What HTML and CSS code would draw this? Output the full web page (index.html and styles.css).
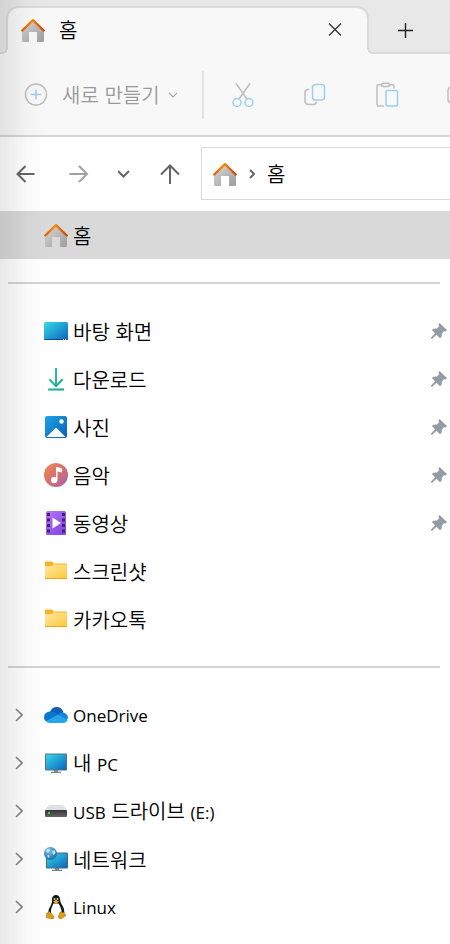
FILE: index.html
```
<!DOCTYPE html>
<html lang="ko">
<head>
  <meta charset="UTF-8">
  <meta name="viewport" content="width=device-width, initial-scale=1.0">
  <title>홈</title>
  <link rel="stylesheet" href="styles.css">
</head>
<body>
  <!-- shared icons -->
  <svg class="defs" width="0" height="0" aria-hidden="true">
    <defs>
      <linearGradient id="wall" x1="0" y1="0" x2="1" y2="1"><stop offset="0" stop-color="#d8d8d8"/><stop offset="1" stop-color="#9c9c9c"/></linearGradient>
      <linearGradient id="roof" x1="0" y1="0" x2="1" y2="0"><stop offset="0" stop-color="#e0600c"/><stop offset=".45" stop-color="#f58a07"/><stop offset="1" stop-color="#cf4108"/></linearGradient>
      <linearGradient id="screen" x1="0" y1="0" x2="1" y2="1"><stop offset="0" stop-color="#35dbe6"/><stop offset="1" stop-color="#0b63bd"/></linearGradient>
      <linearGradient id="down" x1="0" y1="0" x2="1" y2="1"><stop offset="0" stop-color="#3fcf8e"/><stop offset="1" stop-color="#0d9f97"/></linearGradient>
      <linearGradient id="photo" x1="0" y1="0" x2="1" y2="1"><stop offset="0" stop-color="#1fa5ea"/><stop offset="1" stop-color="#0a5eb5"/></linearGradient>
      <linearGradient id="music" x1="0" y1="0" x2="1" y2="1"><stop offset="0" stop-color="#f28a4e"/><stop offset=".5" stop-color="#d4716f"/><stop offset="1" stop-color="#a75fae"/></linearGradient>
      <linearGradient id="film" x1="0" y1="0" x2="1" y2="1"><stop offset="0" stop-color="#b777fa"/><stop offset="1" stop-color="#8040e0"/></linearGradient>
      <linearGradient id="paper" x1="0" y1="0" x2="1" y2="1"><stop offset="0" stop-color="#ffe7a2"/><stop offset="1" stop-color="#ffc93c"/></linearGradient>
      <linearGradient id="drive" x1="0" y1="0" x2="0" y2="1"><stop offset="0" stop-color="#353535"/><stop offset="1" stop-color="#666"/></linearGradient>
      <radialGradient id="globe" cx=".4" cy=".3" r=".7"><stop offset="0" stop-color="#7fc6ea"/><stop offset="1" stop-color="#1b6ca8"/></radialGradient>
    </defs>
    <symbol id="home" viewBox="0 0 24 24">
      <path fill="url(#wall)" d="M12 3 23 13.500V22.500Q23 24 21.500 24H16V14H8V24H2.500Q1 24 1 22.500V13.500Z"/>
      <path fill="none" stroke="url(#roof)" stroke-width="2.400" stroke-linecap="round" stroke-linejoin="round" d="M1.300 12.500 12 2.200 22.700 12.500"/>
    </symbol>
    <symbol id="folder" viewBox="0 0 24 24">
      <path fill="#f8b31c" d="M1 3.500Q1 2.500 2 2.500H8L9.500 4.500H22Q23 4.500 23 5.500V19H1Z"/>
      <path fill="url(#paper)" d="M1 7H8L9.500 5.500H23V19H1Z"/>
      <path fill="#e9a620" d="M1 19H23V20H1Z"/>
    </symbol>
    <symbol id="pin" viewBox="0 0 18 18">
      <path fill="#929ca5" d="M9.500 1 17 8 15.500 9.500 14 9.300 12 11.500 11.500 15 10 16.300 6.500 12.800 1.800 17 .8 16 5 11.300 2 8 3.300 6.800 7 6.500 9 4.300 8.500 2.200Z"/>
    </symbol>
    <symbol id="expand" viewBox="0 0 8 14">
      <path fill="none" stroke="#858585" stroke-width="1.600" d="M1 1 7 7 1 13"/>
    </symbol>
  </svg>

  <header class="tabs">
    <div class="tab">
      <svg class="icon"><use href="#home"/></svg>
      <span class="tab-title">홈</span>
      <button class="btn" aria-label="닫기">
        <svg width="14" height="14" viewBox="0 0 14 14"><path fill="none" stroke="#333" stroke-width="1.300" d="M1 .5 13 12.500M13 .5 1 12.500"/></svg>
      </button>
    </div>
    <button class="btn new-tab" aria-label="새 탭">
      <svg width="16" height="16" viewBox="0 0 16 16"><path fill="none" stroke="#222" stroke-width="1.400" d="M8.500 1V16M1 8.500H16"/></svg>
    </button>
  </header>

  <div class="toolbar">
    <button class="btn create">
      <svg width="24" height="24" viewBox="0 0 24 24" fill="none"><circle cx="12" cy="11.500" r="10.500" stroke="#bdbdbd" stroke-width="1.400"/><path stroke="#9fcdf0" stroke-width="1.500" d="M12 6.500V16.500M7 11.500H17"/></svg>
      <span>새로 만들기</span>
      <svg width="10" height="6" viewBox="0 0 10 6" fill="none"><path stroke="#a5a5a5" stroke-width="1.200" d="M1 .8 5 4.800 9 .8"/></svg>
    </button>
    <div class="tools">
      <button class="btn" aria-label="잘라내기">
        <svg width="24" height="26" viewBox="0 0 24 26" fill="none" stroke-width="1.500"><path stroke="#bdbdbd" d="M5 1.500 16 17M19 1.500 8 17"/><circle cx="6" cy="20.500" r="4" stroke="#9fcdf0"/><circle cx="18" cy="20.500" r="4" stroke="#9fcdf0"/></svg>
      </button>
      <button class="btn" aria-label="복사">
        <svg width="24" height="26" viewBox="0 0 24 26" fill="none" stroke-width="1.500"><path stroke="#bdbdbd" d="M6.500 7.500H5Q2 7.500 2 10.500V18.500Q2 22.500 6 22.500H10Q13 22.500 13.500 19.800"/><rect x="9.500" y="2.500" width="12" height="15.500" rx="3" stroke="#9fcdf0"/></svg>
      </button>
      <button class="btn" aria-label="붙여넣기">
        <svg width="24" height="26" viewBox="0 0 24 26" fill="none" stroke-width="1.500"><path stroke="#bdbdbd" d="M6.500 2.800H3.500Q2 2.800 2 4.300V22.500Q2 24 3.500 24H9M14.500 2.800H17.500Q19 2.800 19 4.300V6.500"/><rect x="6.500" y="1.300" width="8" height="3.200" rx="1.500" stroke="#bdbdbd"/><rect x="11" y="8.500" width="11.500" height="15.500" rx="1.500" stroke="#9fcdf0"/></svg>
      </button>
      <button class="btn" aria-label="이름 바꾸기">
        <svg width="24" height="26" viewBox="0 0 24 26" fill="none" stroke-width="1.500"><path stroke="#bdbdbd" d="M11 5H5Q1 5 1 9V17Q1 21 5 21H11"/></svg>
      </button>
    </div>
  </div>

  <nav class="address">
    <button class="btn" aria-label="뒤로"><svg width="22" height="20" viewBox="0 0 22 20"><path d="M18.500 10H1.500M9.500 2 1.500 10 9.500 18"/></svg></button>
    <button class="btn dim" aria-label="앞으로"><svg width="22" height="20" viewBox="0 0 22 20"><path d="M2.500 10H20M12 2 20 10 12 18"/></svg></button>
    <button class="btn" aria-label="최근 위치"><svg width="12" height="20" viewBox="0 0 12 20"><path d="M0 7 5.500 12.500 11 7"/></svg></button>
    <button class="btn" aria-label="위로"><svg width="22" height="20" viewBox="0 0 22 20"><path d="M11 20V1.500M2 10.500 11 1.500 20 10.500"/></svg></button>
    <div class="path">
      <svg class="icon"><use href="#home"/></svg>
      <svg width="6" height="10" viewBox="0 0 6 10"><path d="M1 1 5 5 1 9"/></svg>
      <a href="#home">홈</a>
    </div>
  </nav>

  <main class="tree">
    <a class="row selected" href="#home">
      <svg class="icon"><use href="#home"/></svg>
      <span>홈</span>
    </a>
    <hr>
    <a class="row" href="#desktop">
      <svg class="icon" viewBox="0 0 24 24"><rect y="3" width="24" height="18" rx="1.500" fill="url(#screen)"/><path fill="#0b4d8c" d="M0 20H24Q24 21 22.500 21H1.500Q0 21 0 20Z"/><path fill="#fff" d="M19 20H20V21H19ZM21 20H22V21H21Z"/></svg>
      <span>바탕 화면</span>
      <svg class="pin"><use href="#pin"/></svg>
    </a>
    <a class="row" href="#downloads">
      <svg class="icon" viewBox="0 0 24 24"><path fill="url(#down)" d="M11 1H13V16.800L18 11.600 19.500 13 12 20.500 4.500 13 6 11.600 11 16.800ZM4 21.500H20V23.500H4Z"/></svg>
      <span>다운로드</span>
      <svg class="pin"><use href="#pin"/></svg>
    </a>
    <a class="row" href="#pictures">
      <svg class="icon" viewBox="0 0 24 24"><rect x="1" y="1" width="22" height="22" rx="2" fill="url(#photo)"/><path fill="#fff" d="M2.500 22 11 13.500Q12 12.500 13 13.500L21.500 22Z"/><circle cx="17.500" cy="6.500" r="2.200" fill="#fff"/></svg>
      <span>사진</span>
      <svg class="pin"><use href="#pin"/></svg>
    </a>
    <a class="row" href="#music">
      <svg class="icon" viewBox="0 0 24 24"><circle cx="12" cy="12" r="12" fill="url(#music)"/><path fill="#fff" d="M12 4H13L18 5.500V9.500L13.500 8.500V17A3.300 3.300 0 1 1 12 14.300Z"/></svg>
      <span>음악</span>
      <svg class="pin"><use href="#pin"/></svg>
    </a>
    <a class="row" href="#videos">
      <svg class="icon" viewBox="0 0 24 24"><rect x="2" y="0" width="20" height="24" rx="1.500" fill="url(#film)"/><path stroke="#40226e" stroke-width="3" stroke-dasharray="3 2.500" d="M4.500 2V23M19.500 2V23"/><path fill="#fff" d="M8.500 6.500 17 12 8.500 17.500Z"/></svg>
      <span>동영상</span>
      <svg class="pin"><use href="#pin"/></svg>
    </a>
    <a class="row" href="#screenshots">
      <svg class="icon"><use href="#folder"/></svg>
      <span>스크린샷</span>
    </a>
    <a class="row" href="#kakaotalk">
      <svg class="icon"><use href="#folder"/></svg>
      <span>카카오톡</span>
    </a>
    <hr>
    <a class="row" href="#onedrive">
      <svg class="expand"><use href="#expand"/></svg>
      <svg class="icon" viewBox="0 0 24 24"><path fill="#0f5fb8" d="M6 9Q8 4 12.500 4 18 4 19.500 9.500L14 14 5 10Z"/><path fill="#0d74cf" d="M5.500 8.500Q8.500 7.500 11 9.500L15 12 3 18.500Q0 17.500 0 14.200 0 9.500 5.500 8.500Z"/><path fill="#1685dc" d="M14 11.500Q16 9 19 9.500 24 10.500 24 15L22 18Z"/><path fill="#28a4ea" d="M2 18 14 11.800 23.500 17Q22.500 20 19 20H5.500Q3 20 2 18Z"/></svg>
      <span class="latin">OneDrive</span>
    </a>
    <a class="row" href="#pc">
      <svg class="expand"><use href="#expand"/></svg>
      <svg class="icon" viewBox="0 0 24 24"><path fill="#8b949b" d="M10 19H14V21H10Z"/><path fill="#56616a" d="M7 20.800H17V21.800H7Z"/><rect x="1" y="2.500" width="22" height="17" rx="1" fill="#56707f"/><rect x="2" y="3.500" width="20" height="15" fill="url(#screen)"/></svg>
      <span>내 <span class="latin">PC</span></span>
    </a>
    <a class="row" href="#usb">
      <svg class="expand"><use href="#expand"/></svg>
      <svg class="icon" viewBox="0 0 24 24"><path fill="#dddfe3" d="M6 6H18Q19.500 6 20.500 7.500L23 11H1L3.500 7.500Q4.500 6 6 6Z"/><rect x="1" y="11" width="22" height="7" rx="1" fill="url(#drive)"/><rect x="4" y="13" width="2" height="2" fill="#2fe02f"/></svg>
      <span><span class="latin">USB</span> 드라이브 <span class="latin">(E:)</span></span>
    </a>
    <a class="row" href="#network">
      <svg class="expand"><use href="#expand"/></svg>
      <svg class="icon" viewBox="0 0 24 24"><path fill="#8b949b" d="M11 21H15V23.200H11Z"/><path fill="#56616a" d="M8 22.800H18V23.800H8Z"/><rect x="2" y="5.500" width="22" height="16" rx="1" fill="#47687d"/><rect x="3" y="6.500" width="20" height="14" fill="url(#screen)"/><circle cx="6.500" cy="6.500" r="6.500" fill="url(#globe)"/><path fill="#c3e3f3" d="M2.500 2.500 5 1.500 6 3.500 4 5.500 2 5ZM8.500 4 10.500 3 11.500 6 9.500 8 8.500 6.500ZM3.500 8 5.500 8.500 5 11 3.500 10Z"/></svg>
      <span>네트워크</span>
    </a>
    <a class="row" href="#linux">
      <svg class="expand"><use href="#expand"/></svg>
      <svg class="icon" viewBox="0 0 24 24"><path fill="#161616" d="M12 0Q15.500 0 16 4 16 7 18 10 21 14 20 19L16 22H8L4 19Q4 14 7 10 8.500 7.500 8 4 8.500 0 12 0Z"/><path fill="#fff" d="M9.500 8.500H14.500Q18 14 17.500 18 15 22.500 12 22.500 8 22 7 18 6.500 14 9.500 8.500Z"/><circle cx="10.500" cy="4" r="1.100" fill="#bbb"/><circle cx="13.500" cy="4" r="1.100" fill="#bbb"/><path fill="#e8ae1b" d="M9 6.500 12 4.800 15 6.500 12 8.800Z"/><path fill="#d9a013" stroke="#7d5c12" stroke-width=".4" d="M5.500 16.500 10 21.500Q10.500 24 8 24L2.500 22.800 2.300 18.500ZM16 17 20 17.500 22 20.500 17 24Q14 24 14.500 21Z"/></svg>
      <span class="latin">Linux</span>
    </a>
  </main>
</body>
</html>
```
FILE: styles.css
```
* {
  box-sizing: border-box;
}

body {
  position: relative;
  margin: 0;
  min-height: 100vh;
  background-color: #fff;
  color: #000;
  font-family: "Noto Sans CJK KR", sans-serif;
  font-size: 20px;
  font-weight: 350;
  line-height: 24px;
}

/* soft shade along the left window edge */
body::before {
  content: "";
  position: absolute;
  top: 0;
  bottom: 0;
  left: 0;
  width: 48px;
  background: linear-gradient(to right, rgba(0,0,0,0.09), rgba(0,0,0,0.02) 60%, rgba(0,0,0,0));
  pointer-events: none;
  z-index: 1;
}

.defs {
  position: absolute;
}

svg {
  display: block;
  flex: none;
}

a {
  color: inherit;
  text-decoration: none;
}

.btn {
  display: flex;
  align-items: center;
  padding: 0;
  border: none;
  background: none;
  color: inherit;
  font: inherit;
  cursor: pointer;
}

.icon {
  width: 24px;
  height: 24px;
}

/* tabs */
.tabs {
  display: flex;
  height: 54px;
  padding: 6px 0 0 6px;
  background-color: #e8e8e8;
  box-shadow: inset 0 -2px #dadada;
}

.tab {
  position: relative;
  display: flex;
  align-items: center;
  flex: 0 1 363px;
  gap: 14px;
  padding: 0 25px 2px 13px;
  border: 2px solid #dadada;
  border-bottom: none;
  border-radius: 12px 12px 0 0;
  background-color: #f8f8f8;
}

.tab::before,
.tab::after {
  content: "";
  position: absolute;
  bottom: 0;
  width: 6px;
  height: 6px;
}

.tab::before {
  left: -6px;
  background: radial-gradient(circle at 0 0, #e8e8e8 4px, #dadada 4px, #dadada 6px, #f8f8f8 6px);
}

.tab::after {
  right: -6px;
  background: radial-gradient(circle at 100% 0, #e8e8e8 4px, #dadada 4px, #dadada 6px, #f8f8f8 6px);
}

.tab-title {
  flex: 1;
}

.new-tab {
  margin-left: 28px;
}

/* toolbar */
.toolbar {
  display: flex;
  align-items: center;
  height: 83px;
  padding-left: 24px;
  border-bottom: 2px solid #d5d5d5;
  background-color: #f8f8f8;
  color: #9a9a9a;
  overflow: hidden;
}

.create {
  flex: none;
  gap: 8px;
  padding-right: 24px;
}

.create span {
  margin-left: 6px;
}

.tools {
  display: flex;
  align-items: center;
  gap: 48px;
  height: 48px;
  padding-left: 27px;
  border-left: 2px solid #e4e4e4;
}

/* address bar */
.address {
  display: flex;
  align-items: center;
  gap: 29px;
  height: 74px;
  padding: 0 0 1px 16px;
}

.address path {
  fill: none;
  stroke: #666;
  stroke-width: 2;
}

.address .dim path {
  stroke: #a0a0a0;
}

.path {
  display: flex;
  align-items: center;
  flex: 1;
  gap: 12px;
  height: 53px;
  margin-left: -9px;
  padding-left: 11px;
  border: 1px solid #d9d9d9;
  border-right: none;
}

/* tree */
.row {
  display: flex;
  align-items: center;
  gap: 5px;
  height: 48px;
  padding: 0 2px 0 44px;
}

.row > span {
  padding-top: 2px;
}

.row.selected {
  background-color: #d9d9d9;
}

.latin {
  font-family: "Open Sans", "Noto Sans CJK KR", sans-serif;
  font-size: 17px;
  font-weight: 400;
}

.expand {
  width: 8px;
  height: 14px;
  margin: 0 16px 0 -29px;
}

.pin {
  width: 18px;
  height: 18px;
  margin-left: auto;
}

hr {
  height: 2px;
  margin: 23px 10px 23px 8px;
  border: none;
  background-color: #d5d5d5;
}
```
